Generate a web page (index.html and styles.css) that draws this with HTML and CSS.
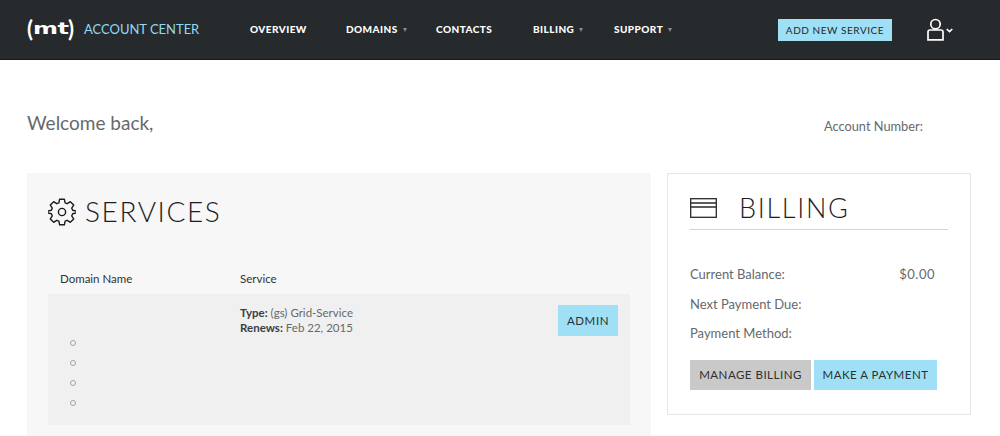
FILE: index.html
```html
<!DOCTYPE html>
<html lang="en">
<head>
<meta charset="utf-8">
<title>Account Center</title>
<link rel="stylesheet" href="styles.css">
</head>
<body>
<header class="topbar">
  <a class="logo"><span class="paren">(</span><span class="logo-mt">mt</span><span class="paren">)</span></a>
  <span class="brand">ACCOUNT CENTER</span>
  <nav class="nav">
    <a class="nav-item w-overview">OVERVIEW</a>
    <a class="nav-item w-domains">DOMAINS<i class="caret"></i></a>
    <a class="nav-item w-contacts">CONTACTS</a>
    <a class="nav-item w-billing">BILLING<i class="caret"></i></a>
    <a class="nav-item">SUPPORT<i class="caret"></i></a>
  </nav>
  <a class="add-service">ADD NEW SERVICE</a>
  <span class="user">
    <svg class="user-icon" width="17" height="23" viewBox="0 0 17 23" fill="none" stroke="#fff" stroke-width="1.7">
      <circle cx="8.5" cy="6.2" r="4.7"/>
      <path d="M1 21.9V14a2 2 0 0 1 2-2h11a2 2 0 0 1 2 2v7.9z"/>
    </svg>
    <svg class="user-chev" width="7" height="5" viewBox="0 0 7 5" fill="none" stroke="#fff" stroke-width="1.6"><path d="M.7 1l2.8 2.6L6.3 1"/></svg>
  </span>
</header>

<main class="page">
  <section class="welcome">
    <h1>Welcome back,</h1>
    <span class="account">Account Number:</span>
  </section>

  <div class="columns">
    <section class="services">
      <h2 class="services-title">
        <svg class="gear" width="28" height="28" viewBox="0 0 28 28" fill="none" stroke="#1d1d1f" stroke-width="1.4" stroke-linejoin="round">
          <circle cx="14" cy="14" r="3.6"/>
          <path d="M11.6 1.2h4.8l.7 3.6 2.2.9 3-2 3.4 3.4-2 3 .9 2.2 3.6.7v2l-3.6.7-.9 2.2 2 3-3.4 3.4-3-2-2.2.9-.7 3.6h-4.8l-.7-3.6-2.2-.9-3 2-3.4-3.4 2-3-.9-2.2-3.6-.7v-2l3.6-.7.9-2.2-2-3 3.4-3.4 3 2 2.2-.9z"/>
        </svg>
        <span>SERVICES</span>
      </h2>
      <div class="table-head">
        <span class="col-domain">Domain Name</span>
        <span>Service</span>
      </div>
      <div class="service-row">
        <ul class="domains">
          <li></li><li></li><li></li><li></li>
        </ul>
        <div class="service-info">
          <p><b>Type:</b> (gs) Grid-Service</p>
          <p><b>Renews:</b> Feb 22, 2015</p>
        </div>
        <a class="btn btn-blue btn-admin">ADMIN</a>
      </div>
    </section>

    <aside class="billing">
      <h2 class="billing-title">
        <svg class="card" width="27" height="20" viewBox="0 0 27 20" fill="none" stroke="#2a2a2c" stroke-width="1.3">
          <rect x=".7" y=".7" width="25.6" height="18.6"/>
          <path d="M.7 5h25.6M.7 9h25.6"/>
        </svg>
        <span>BILLING</span>
      </h2>
      <dl class="billing-list">
        <div class="line balance"><dt>Current Balance:</dt><dd>$0.00</dd></div>
        <div class="line"><dt>Next Payment Due:</dt></div>
        <div class="line"><dt>Payment Method:</dt></div>
      </dl>
      <div class="actions">
        <a class="btn btn-grey">MANAGE BILLING</a>
        <a class="btn btn-blue">MAKE A PAYMENT</a>
      </div>
    </aside>
  </div>
</main>
</body>
</html>
```

FILE: styles.css
```css
* { box-sizing: border-box; }
html, body { margin: 0; height: 436px; overflow: hidden; background: #fff; }
body { font-family: Lato, "Liberation Sans", sans-serif; color: #66696c; }

.topbar {
  height: 60px;
  background: #272a2d;
  border-bottom: 1px solid #17191b;
  display: flex;
  align-items: center;
  padding: 0 0 2px 27px;
}
.logo {
  width: 57px;
  color: #fff;
  display: flex;
  align-items: center;
}
.paren { font-size: 22px; font-weight: 700; line-height: 22px; }
.logo-mt {
  display: inline-block;
  width: 35px;
  font: 700 16px/22px "DejaVu Sans", sans-serif;
  letter-spacing: -.4px;
  transform: scaleX(1.5);
  transform-origin: 0 50%;
}
.brand {
  width: 166px;
  color: #8fd9f2;
  font-size: 13px;
  letter-spacing: -.02px;
}
.nav { display: flex; width: 528px; }
.nav-item {
  color: #fff;
  font-size: 10px;
  font-weight: 900;
  letter-spacing: .45px;
  white-space: nowrap;
}
.w-overview { width: 96px; }
.w-domains { width: 90px; }
.w-contacts { width: 97px; }
.w-billing { width: 81px; }
.caret {
  display: inline-block;
  margin-left: 5px;
  vertical-align: 1px;
  border: 2.5px solid transparent;
  border-top: 4px solid #85888a;
  border-bottom: 0;
}
.add-service {
  width: 114px;
  height: 22px;
  margin-top: 2px;
  background: #9fe0f6;
  color: #23282c;
  font-size: 10px;
  letter-spacing: .55px;
  display: flex;
  align-items: center;
  justify-content: center;
}
.user { display: flex; align-items: center; gap: 2px; margin-left: 35px; margin-top: 2px; }
.user-chev { margin-top: 1px; }

.page { padding: 0 29px 0 27px; }
.welcome {
  height: 113px;
  display: flex;
  justify-content: space-between;
  padding-top: 50px;
}
.welcome h1 {
  margin: 0;
  font-size: 19px;
  line-height: 26px;
  font-weight: 400;
  color: #66696c;
}
.account {
  width: 100px;
  margin-right: 47px;
  font-size: 12.8px;
  line-height: 33px;
  white-space: nowrap;
}

.columns { display: flex; align-items: flex-start; gap: 16px; }

.services {
  width: 624px;
  height: 263px;
  flex: none;
  background: #f7f7f7;
  padding: 23px 21px 0;
}
.services-title {
  margin: 0;
  display: flex;
  align-items: center;
  gap: 9px;
  font-size: 28px;
  line-height: 30px;
  font-weight: 300;
  color: #1d1d1f;
  letter-spacing: 1.6px;
}
.gear { margin-top: 2px; }
.table-head {
  display: flex;
  margin-top: 43px;
  padding-left: 12px;
  font-size: 11.5px;
  line-height: 20px;
  color: #2f3336;
}
.col-domain { width: 180px; }
.service-row {
  position: relative;
  height: 131px;
  margin-top: 5px;
  background: #f0f0f0;
  display: flex;
}
.domains {
  width: 192px;
  margin: 0;
  padding: 46px 0 0 22px;
  list-style: none;
}
.domains li {
  width: 6px;
  height: 6px;
  margin: 0 0 14px;
  border: 1px solid #a4a4a4;
  border-radius: 50%;
}
.service-info { padding-top: 11px; font-size: 11.5px; line-height: 15px; color: #66696c; }
.service-info p { margin: 0; }
.service-info b { color: #3a3d40; font-weight: 700; }

.btn {
  display: flex;
  align-items: center;
  justify-content: center;
  height: 30px;
  color: #2c3033;
  font-size: 11.5px;
  letter-spacing: .5px;
  white-space: nowrap;
}
.btn-blue { background: #9fe0f6; }
.btn-grey { background: #c9c9c9; }
.btn-admin { position: absolute; top: 11px; right: 12px; width: 60px; height: 31px; letter-spacing: .6px; }

.billing {
  width: 304px;
  height: 242px;
  flex: none;
  border: 1px solid #e6e6e6;
  padding: 17px 22px 0;
}
.billing-title {
  margin: 0;
  display: flex;
  align-items: center;
  gap: 22px;
  height: 39px;
  padding-bottom: 6px;
  border-bottom: 1px solid #d4d4d4;
  font-size: 27px;
  font-weight: 300;
  color: #1d1d1f;
  letter-spacing: 1.7px;
}
.card { margin-top: 2px; }
.billing-list { margin: 34px 0 0; font-size: 13px; line-height: 20px; }
.line { display: flex; justify-content: space-between; height: 29.5px; }
.line dd { margin: 0 13px 0 0; letter-spacing: .5px; }
.actions { display: flex; gap: 3px; margin-top: 7px; }
.actions .btn { width: 121px; }
.actions .btn-blue { width: 123px; }
```
